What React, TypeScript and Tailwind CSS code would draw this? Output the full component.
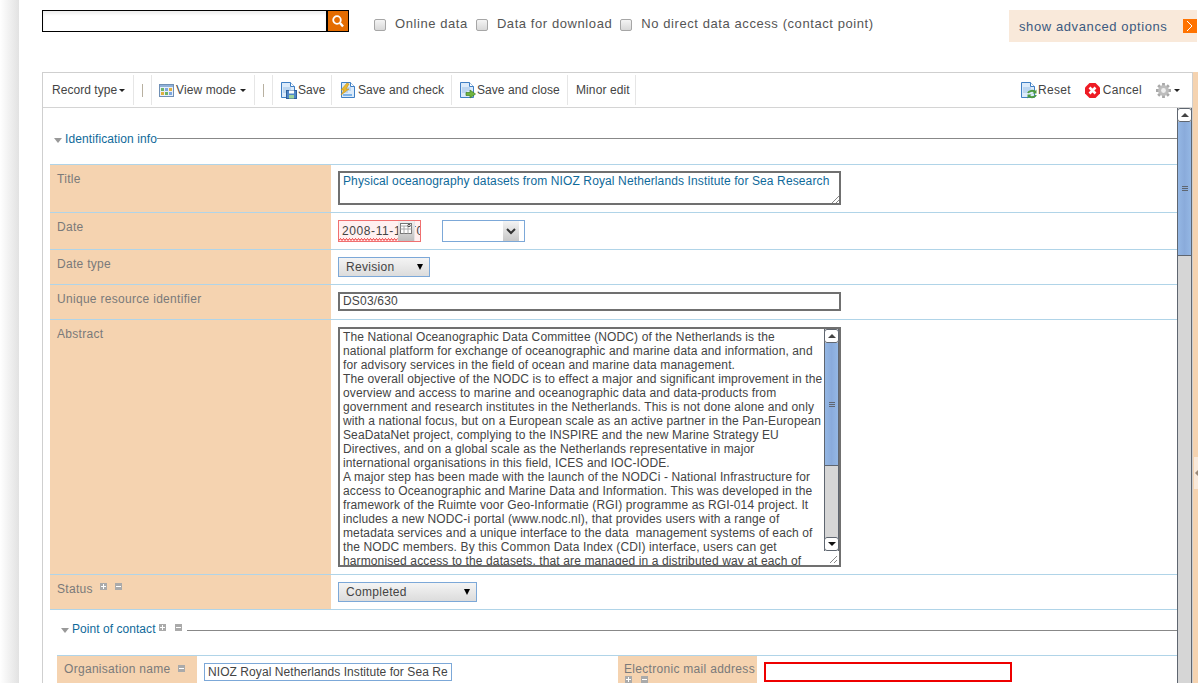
const ABSTRACT = [
  "The National Oceanographic Data Committee (NODC) of the Netherlands is the",
  "national platform for exchange of oceanographic and marine data and information, and",
  "for advisory services in the field of ocean and marine data management.",
  "The overall objective of the NODC is to effect a major and significant improvement in the",
  "overview and access to marine and oceanographic data and data-products from",
  "government and research institutes in the Netherlands. This is not done alone and only",
  "with a national focus, but on a European scale as an active partner in the Pan-European",
  "SeaDataNet project, complying to the INSPIRE and the new Marine Strategy EU",
  "Directives, and on a global scale as the Netherlands representative in major",
  "international organisations in this field, ICES and IOC-IODE.",
  "A major step has been made with the launch of the NODCi - National Infrastructure for",
  "access to Oceanographic and Marine Data and Information. This was developed in the",
  "framework of the Ruimte voor Geo-Informatie (RGI) programme as RGI-014 project. It",
  "includes a new NODC-i portal (www.nodc.nl), that provides users with a range of",
  "metadata services and a unique interface to the data  management systems of each of",
  "the NODC members. By this Common Data Index (CDI) interface, users can get",
  "harmonised access to the datasets, that are managed in a distributed way at each of",
];

function Caret() {
  return <span className="ml-[2px] inline-block h-0 w-0 border-x-[3px] border-t-[3px] border-x-transparent border-t-[#222]" />;
}

function DocIcon({ kind }: { kind: "save" | "check" | "close" | "reset" }) {
  return (
    <svg width="17" height="17" viewBox="0 0 17 17" className="shrink-0">
      <path d="M1.5 .5h9l4 4v11h-13z" fill="#dcebfa" stroke="#3f7fc4" />
      <path d="M10.5 .5v4h4" fill="#fff" stroke="#3f7fc4" />
      <path d="M3 6h8M3 8h8M3 10h5" stroke="#9cc0e6" />
      {kind === "save" && (
        <g>
          <rect x="6.5" y="8.5" width="10" height="8" fill="#4f86c6" stroke="#2f5f9a" />
          <rect x="9" y="8.5" width="5" height="3" fill="#fff" />
          <rect x="9" y="13" width="5" height="3.5" fill="#9fd39a" />
        </g>
      )}
      {kind === "check" && (
        <g>
          <path d="M7 1 1 8h3l-3 5 8-6H6l3-5z" fill="#eab92f" stroke="#c4901c" strokeWidth=".6" />
          <rect x="3" y="12" width="9" height="2" fill="#7db3e8" />
        </g>
      )}
      {kind === "close" && <path d="M7 10.5h4v-2.500l5.500 4-5.500 4v-2.500h-4z" fill="#6fb43f" stroke="#3f7f22" strokeWidth=".7" />}
      {kind === "reset" && (
        <g fill="none" stroke="#4f9a3f" strokeWidth="2">
          <path d="M8 11a4 3 0 0 1 7-1" />
          <path d="M16 13a4 3 0 0 1-7 1" />
          <path d="M16.500 7.500v4h-4z" fill="#4f9a3f" stroke="none" />
          <path d="M7.500 16.500v-4h4z" fill="#4f9a3f" stroke="none" />
        </g>
      )}
    </svg>
  );
}

function ViewIcon() {
  return (
    <svg width="15" height="13" viewBox="0 0 15 13" className="shrink-0">
      <rect x=".5" y=".5" width="14" height="12" fill="#e8f0fa" stroke="#6f8fb5" />
      <rect x="1" y="1" width="13" height="2" fill="#8fb0d8" />
      <rect x="2" y="4" width="3" height="3" fill="#6db36a" />
      <rect x="6" y="4" width="3" height="3" fill="#7ea7df" />
      <rect x="10" y="4" width="3" height="3" fill="#e0b040" />
      <rect x="2" y="8" width="3" height="3" fill="#e0b040" />
      <rect x="6" y="8" width="3" height="3" fill="#6db36a" />
      <rect x="10" y="8" width="3" height="3" fill="#7ea7df" />
    </svg>
  );
}

function CancelIcon() {
  return (
    <svg width="15" height="15" viewBox="0 0 15 15" className="shrink-0">
      <path d="M4.500 0h6L15 4.500v6L10.500 15h-6L0 10.500v-6z" fill="#ee1c25" />
      <path d="M4.500 4.500l6 6M10.500 4.500l-6 6" stroke="#fff" strokeWidth="2.600" />
    </svg>
  );
}

function GearIcon() {
  return (
    <svg width="17" height="17" viewBox="0 0 17 17" className="shrink-0">
      <path d="M8.500 1v15M1 8.500h15M3.200 3.200l10.600 10.600M13.800 3.200 3.200 13.800" stroke="#a8a8a8" strokeWidth="2.800" />
      <circle cx="8.500" cy="8.500" r="5.400" fill="#bdbdbd" />
      <circle cx="8.500" cy="8.500" r="2.400" fill="#efefef" />
    </svg>
  );
}

function Sq({ minus }: { minus?: boolean }) {
  return (
    <span className="flex h-[7px] w-[7px] shrink-0 items-center justify-center bg-[#aaaaaa]">
      <span className="relative h-px w-[5px] bg-white">
        {!minus && <span className="absolute left-[2px] top-[-2px] h-[5px] w-px bg-white" />}
      </span>
    </span>
  );
}

function Tri() {
  return <span className="block h-0 w-0 border-x-[4px] border-t-[5px] border-x-transparent border-t-[#999]" />;
}

function SelectTri() {
  return <span className="h-0 w-0 border-x-[3.5px] border-t-[6px] border-x-transparent border-t-black" />;
}

function ToolCell({ children, className = "" }: { children: React.ReactNode; className?: string }) {
  return <div className={"flex h-[30px] shrink-0 items-center whitespace-nowrap border-r border-[#e6e6e6] " + className}>{children}</div>;
}

function Row({ label, extra, h, children }: { label: string; extra?: React.ReactNode; h: string; children: React.ReactNode }) {
  return (
    <div className={"flex border-t border-[#b0d4e8] " + h}>
      <div className="flex w-[281px] shrink-0 gap-[7px] bg-[#f5d3b0] pl-[7px] pt-[7px] text-[12px] leading-[14px] text-[#7a7a7a]">
        <span>{label}</span>
        {extra}
      </div>
      <div className="min-w-0 flex-1 pl-[7px] pt-[7px]">{children}</div>
    </div>
  );
}

function Arrow({ up }: { up?: boolean }) {
  return (
    <div className="flex h-[14px] shrink-0 items-center justify-center rounded-[3px] border border-[#5f6670] bg-white">
      <span className={"h-0 w-0 border-x-[4px] border-x-transparent " + (up ? "border-b-[4px] border-b-[#444]" : "border-t-[4px] border-t-[#111]")} />
    </div>
  );
}

function Grip() {
  return (
    <div className="flex w-[6px] flex-col gap-[1px]">
      <span className="h-px bg-[#5f6670]" />
      <span className="h-px bg-[#5f6670]" />
      <span className="h-px bg-[#5f6670]" />
    </div>
  );
}

function Check({ label }: { label: string }) {
  return (
    <div className="flex items-center">
      <span className="mt-[2px] h-[12px] w-[12px] rounded-[2px] border border-[#a6a6a6] bg-gradient-to-b from-[#f4f4f4] to-[#d8d8d8]" />
      <span className="ml-[9px]">{label}</span>
    </div>
  );
}

function Resizer() {
  return (
    <svg width="8" height="8" viewBox="0 0 8 8" stroke="#888" fill="none">
      <path d="M1 8l7-7M5 8l3-3" />
    </svg>
  );
}

export default function App() {
  return (
    <div className="relative flex h-[683px] w-[1200px] overflow-hidden bg-white font-['Liberation_Sans',Arial,sans-serif] text-[#444] [letter-spacing:0.3px]">
      <div className="w-[19px] shrink-0 bg-gradient-to-r from-white to-[#e2e2e2]" />
      <div className="flex w-[1179px] shrink-0 flex-col pl-[23px]">
        <div className="flex h-[72px] shrink-0 items-start">
          <div className="mt-[10px] flex h-[22px] w-[307px] shrink-0">
            <div className="flex-1 border border-black bg-white shadow-[inset_0_3px_3px_#eeeeee]" />
            <div className="flex w-[22px] items-center justify-center border border-black bg-[#e46c00]">
              <svg width="14" height="14" viewBox="0 0 14 14" fill="none" stroke="#fff">
                <circle cx="6" cy="6" r="3.800" strokeWidth="1.800" />
                <path d="M9 9l3 3.500" strokeWidth="2.400" />
              </svg>
            </div>
          </div>
          <div className="ml-[25px] mt-[16px] flex gap-[8px] text-[13px] leading-[16px] text-[#555] [letter-spacing:0.58px]">
            <Check label="Online data" />
            <Check label="Data for download" />
            <Check label="No direct data access (contact point)" />
          </div>
          <div className="ml-auto mr-[1px] mt-[10px] flex h-[32px] w-[188px] items-center bg-[#f9e9da] pl-[10px] text-[13px] text-[#3c5a80] [letter-spacing:0.6px]">
            <span className="pt-[1px]">show advanced options</span>
            <span className="ml-auto flex h-[14px] w-[14px] items-center justify-center bg-[#ff7300]">
              <svg width="8" height="12" viewBox="0 0 8 12" fill="none" stroke="#fff" strokeWidth="1">
                <path d="M1 1l5 5-5 5" />
              </svg>
            </span>
          </div>
        </div>

        <div className="flex min-h-0 flex-1 border-r-[5px] border-r-[#f5d3b0]">
          <div className="flex min-w-0 flex-1 flex-col border-x border-t border-[#cfcfcf]">
            <div className="flex h-[35px] shrink-0 items-center border-b border-[#d4d4d4] text-[12px] text-[#444]">
              <ToolCell className="w-[91px] pl-[9px] [letter-spacing:0.05px]">
                <span>Record type</span>
                <Caret />
              </ToolCell>
              <ToolCell className="w-[18px] justify-center">
                <span className="h-[13px] w-px bg-[#b8b0a0]" />
              </ToolCell>
              <ToolCell className="w-[103px] gap-[2px] pl-[7px] [letter-spacing:0.1px]">
                <ViewIcon />
                <span>View mode</span>
                <Caret />
              </ToolCell>
              <ToolCell className="w-[18px] justify-center">
                <span className="h-[13px] w-px bg-[#b8b0a0]" />
              </ToolCell>
              <ToolCell className="w-[59px] gap-[1px] pl-[7px] [letter-spacing:0.05px]">
                <DocIcon kind="save" />
                <span>Save</span>
              </ToolCell>
              <ToolCell className="w-[120px] gap-[1px] pl-[8px] [letter-spacing:0.05px]">
                <DocIcon kind="check" />
                <span>Save and check</span>
              </ToolCell>
              <ToolCell className="w-[116px] gap-[1px] pl-[7px] [letter-spacing:0.05px]">
                <DocIcon kind="close" />
                <span>Save and close</span>
              </ToolCell>
              <ToolCell className="w-[68px] pl-[8px] [letter-spacing:0.1px]">
                <span>Minor edit</span>
              </ToolCell>
              <div className="ml-auto flex items-center pr-[12px]">
                <DocIcon kind="reset" />
                <span className="ml-[1px]">Reset</span>
                <span className="ml-[14px]"><CancelIcon /></span>
                <span className="ml-[3px]">Cancel</span>
                <span className="ml-[13px]"><GearIcon /></span>
                <Caret />
              </div>
            </div>

            <div className="flex min-h-0 flex-1">
              <div className="min-w-0 flex-1 overflow-hidden pl-[7px]">
                <div className="flex h-[56px] items-start pt-[24px] text-[12px] leading-[14px] text-[#0f6a9a] [letter-spacing:0.1px]">
                  <span className="ml-[4px] mr-[3px] mt-[6px]"><Tri /></span>
                  <span>Identification info</span>
                  <span className="mt-[6px] h-px flex-1 bg-[#888]" />
                </div>
                <Row label="Title" h="h-[48px]">
                  <div className="relative -mt-px h-[34px] w-[503px] whitespace-nowrap border-2 border-[#707070] px-[3px] pt-px text-[12px] leading-[14px] text-[#0f6a9a] [letter-spacing:0.12px]">
                    Physical oceanography datasets from NIOZ Royal Netherlands Institute for Sea Research
                    <span className="absolute bottom-0 right-0 flex"><Resizer /></span>
                  </div>
                </Row>
                <Row label="Date" h="h-[37px]">
                  <div className="flex">
                    <div className="relative h-[22px] w-[83px] overflow-hidden whitespace-nowrap border border-[#f07070] bg-[#fff0f0] pl-[3px] text-[12px] leading-[20px] [letter-spacing:0.6px]">
                      2008-11-10T00:00:00
                      <span className="absolute bottom-0 left-[59px] flex h-[20px] w-[17px] items-start justify-center border-r border-[#e4e4e4] bg-gradient-to-b from-[#f0f0f0] to-[#bdbdbd] pt-[2px]">
                        <svg width="12" height="11" viewBox="0 0 12 11" fill="#fff" stroke="#777">
                          <rect x=".5" y=".5" width="11" height="10" />
                          <path d="M.5 3h11M.5 6h11M4 3v7.500M8 3v7.500" stroke="#aaa" fill="none" />
                          <circle cx="9" cy="2.500" r="1.200" stroke="#444" />
                        </svg>
                      </span>
                      <svg width="59" height="3" viewBox="0 0 59 3" className="absolute bottom-0 left-0" fill="none" stroke="#f03030">
                        <path d="M0 2.500 1.500 .5 3 2.500 4.500 .5 6 2.500 7.500 .5 9 2.500 10.500 .5 12 2.500 13.500 .5 15 2.500 16.500 .5 18 2.500 19.500 .5 21 2.500 22.500 .5 24 2.500 25.500 .5 27 2.500 28.500 .5 30 2.500 31.500 .5 33 2.500 34.500 .5 36 2.500 37.500 .5 39 2.500 40.500 .5 42 2.500 43.500 .5 45 2.500 46.500 .5 48 2.500 49.500 .5 51 2.500 52.500 .5 54 2.500 55.500 .5 57 2.500 58.500 .5" />
                      </svg>
                    </div>
                    <div className="ml-[21px] flex h-[22px] w-[83px] justify-end border border-[#7ca8d8] pr-[5px]">
                      <span className="flex w-[16px] items-center justify-center bg-gradient-to-b from-[#f4f4f4] to-[#c8c8c8]">
                        <svg width="10" height="7" viewBox="0 0 10 7" fill="none" stroke="#333" strokeWidth="2">
                          <path d="M1 1l4 4 4-4" />
                        </svg>
                      </span>
                    </div>
                  </div>
                </Row>
                <Row label="Date type" h="h-[35px]">
                  <div className="flex h-[20px] w-[92px] items-center justify-between border border-[#7ca8d8] bg-gradient-to-b from-[#f4f4f4] to-[#dcdcdc] pl-[7px] pr-[6px] text-[12px]">
                    <span>Revision</span>
                    <SelectTri />
                  </div>
                </Row>
                <Row label="Unique resource identifier" h="h-[35px]">
                  <div className="h-[19px] w-[503px] border-2 border-[#707070] pl-[3px] text-[12px] leading-[15px] [letter-spacing:0.2px]">DS03/630</div>
                </Row>
                <Row label="Abstract" h="h-[255px]">
                  <div className="flex h-[240px] w-[503px] border-2 border-[#707070]">
                    <div className="min-w-0 flex-1 overflow-hidden whitespace-pre pl-[3px] pt-[1px] text-[12px] leading-[14px] [letter-spacing:0.12px]">
                      {ABSTRACT.map((line) => (
                        <div key={line}>{line}</div>
                      ))}
                    </div>
                    <div className="flex w-[15px] shrink-0 flex-col">
                      <div className="flex h-[222px] flex-col border-x border-[#5f6670]">
                        <div className="-mx-px"><Arrow up /></div>
                        <div className="flex h-[123px] items-center justify-center border-b border-[#5f6670] bg-gradient-to-r from-[#94b7e4] via-[#8aabdb] to-[#94b7e4]"><Grip /></div>
                        <div className="flex-1 bg-[#d6d6d6]" />
                        <div className="-mx-px"><Arrow /></div>
                      </div>
                      <div className="flex flex-1 items-end justify-end p-[2px]">
                        <Resizer />
                      </div>
                    </div>
                  </div>
                </Row>
                <Row label="Status" h="h-[35px]" extra={<span className="flex gap-[8px] pt-[1px]"><Sq /><Sq minus /></span>}>
                  <div className="flex h-[20px] w-[139px] items-center justify-between border border-[#7ca8d8] bg-gradient-to-b from-[#f4f4f4] to-[#dcdcdc] pl-[7px] pr-[6px] text-[12px]">
                    <span>Completed</span>
                    <SelectTri />
                  </div>
                </Row>
                <div className="border-t border-[#b0d4e8] pl-[7px]">
                  <div className="flex h-[45px] items-start pt-[12px] text-[12px] leading-[14px] text-[#0f6a9a] [letter-spacing:0.05px]">
                    <span className="ml-[4px] mr-[3px] mt-[6px]"><Tri /></span>
                    <span>Point of contact</span>
                    <span className="ml-[3px] mt-[2px] flex gap-[9px]"><Sq /><Sq minus /></span>
                    <span className="ml-[5px] mt-[8px] h-px flex-1 bg-[#888]" />
                  </div>
                  <div className="flex border-t border-[#b0d4e8]">
                    <div className="flex w-[140px] shrink-0 gap-[7px] bg-[#f5d3b0] pl-[7px] pt-[6px] text-[12px] leading-[14px] text-[#7a7a7a]">
                      <span>Organisation name</span>
                      <span className="pt-[3px]"><Sq minus /></span>
                    </div>
                    <div className="w-[421px] shrink-0 pl-[7px] pt-[7px]">
                      <div className="h-[18px] w-[248px] overflow-hidden whitespace-nowrap border border-[#7ca8d8] pl-[3px] text-[12px] leading-[16px] [letter-spacing:0.07px]">
                        NIOZ Royal Netherlands Institute for Sea Re
                      </div>
                    </div>
                    <div className="w-[139px] shrink-0 bg-[#f5d3b0] pl-[6px] pt-[6px] text-[12px] leading-[14px] text-[#7a7a7a]">
                      <div className="whitespace-nowrap">Electronic mail address</div>
                      <div className="ml-[1px] flex gap-[9px]"><Sq /><Sq minus /></div>
                    </div>
                    <div className="flex-1 pl-[7px] pt-[6px]">
                      <div className="h-[20px] w-[248px] border-2 border-[#ee0000]" />
                    </div>
                  </div>
                </div>
              </div>
              <div className="flex w-[15px] shrink-0 flex-col border-x border-[#5f6670]">
                <div className="-mx-px"><Arrow up /></div>
                <div className="flex h-[134px] shrink-0 items-center justify-center border-b border-[#5f6670] bg-gradient-to-r from-[#94b7e4] via-[#8aabdb] to-[#94b7e4]"><Grip /></div>
                <div className="flex-1 bg-[#d6d6d6]" />
              </div>
            </div>
          </div>
        </div>
      </div>
      <div className="absolute left-[1194px] top-[457px] flex h-[32px] w-[4px] items-center justify-end bg-[#f9e9da]">
        <span className="h-0 w-0 border-y-[3px] border-r-[3px] border-y-transparent border-r-[#998877]" />
      </div>
    </div>
  );
}
